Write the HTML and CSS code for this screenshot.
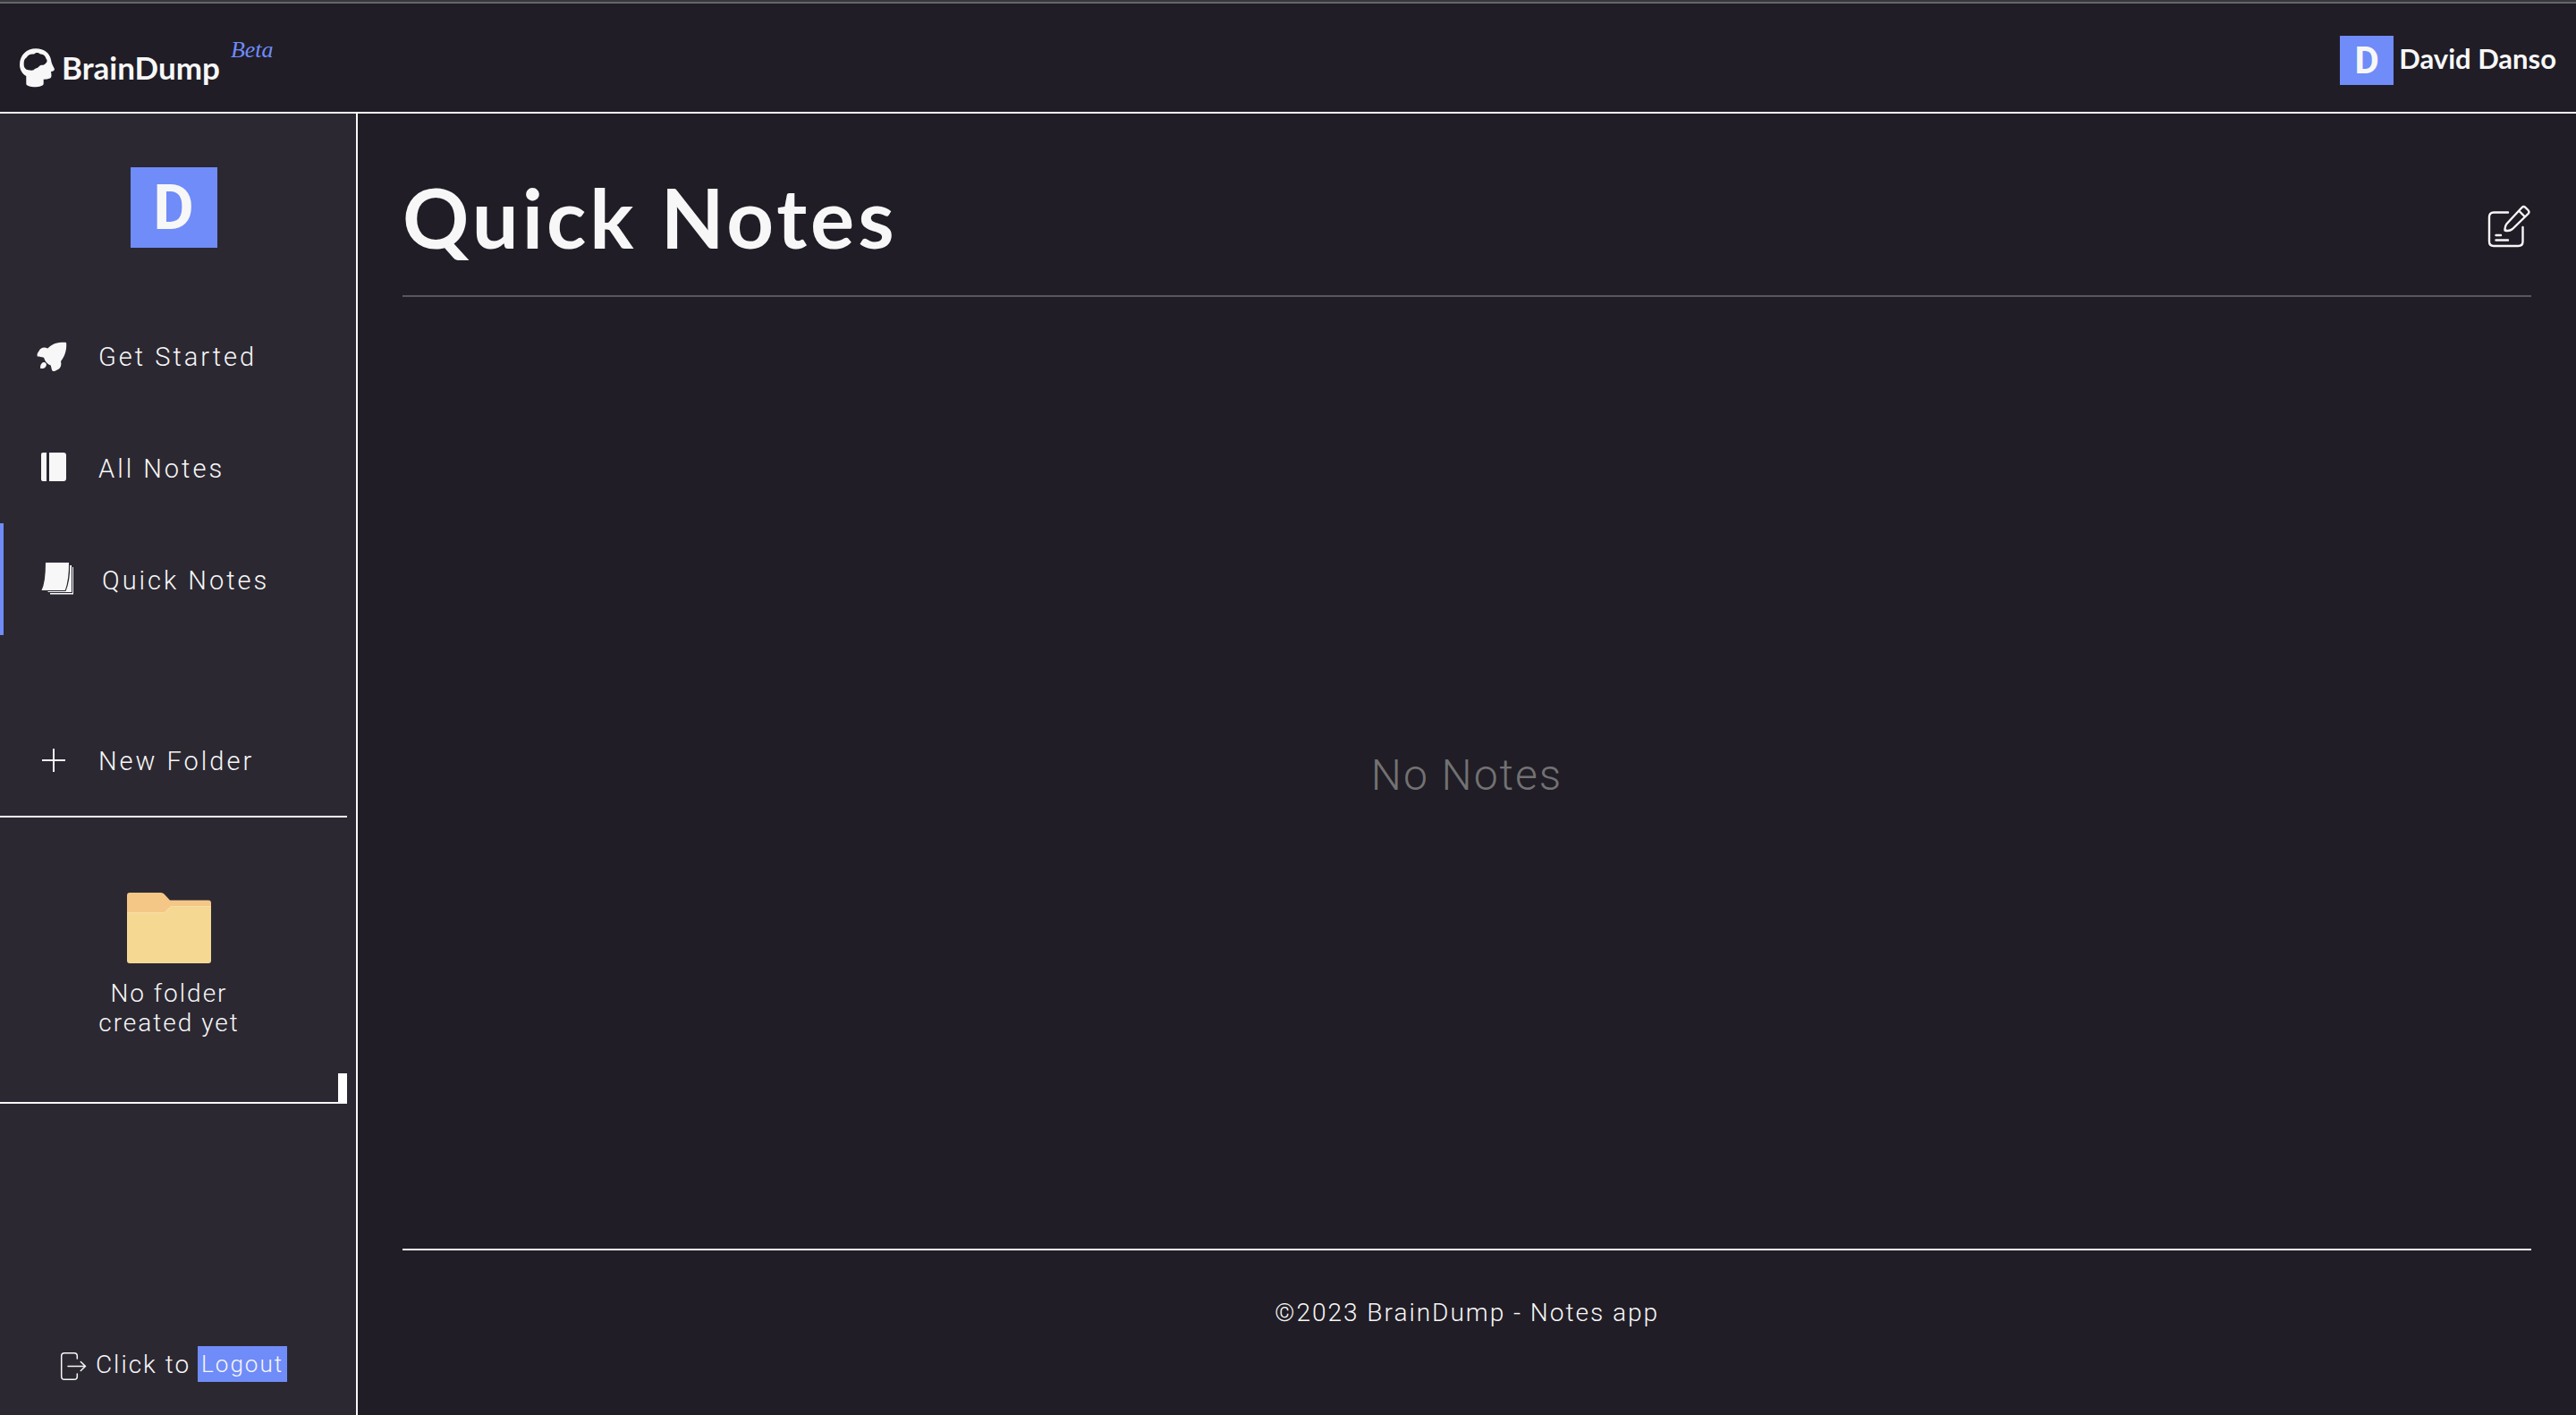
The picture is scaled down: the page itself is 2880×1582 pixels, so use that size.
FILE: index.html
```html
<!DOCTYPE html>
<html lang="en">
<head>
<meta charset="utf-8">
<title>BrainDump - Quick Notes</title>
<link rel="stylesheet" href="styles.css">
</head>
<body>
<header class="topbar">
  <a class="brand" href="#">
    <svg class="brand-logo" viewBox="0 0 40 44" aria-hidden="true"><path fill="currentColor" fill-rule="evenodd" d="M18 .3C27.500.3 33.500 5.500 35 12.700C35.300 16.500 37.500 20 39 23.200Q38.700 25.700 35 26C35.600 29.500 36 32.500 34 33.500Q30.500 34.800 26.700 34.700V39.500C26.700 44.500 7.300 44.500 7.300 39.500V31C2.500 28.500 0 23.500 0 18.300C0 7.500 8 .3 18 .3ZM4.700 17.700C4.500 21 6.500 24 9.700 24.200C12 24.800 14 24.800 15.700 24.300C17 22.500 18 22.500 19.700 22C21.500 20.500 22.500 19 24 18.700C26 19 28 18.500 29 16.700C31 15.500 31 13 29.500 11.500C28.500 8.500 26.500 6 23 6.500C20 4 17.500 5 16 6.500C12 6 9 7.500 7.800 10.300C5 12 4.500 15 4.700 17.700Z"/></svg>
    <span class="brand-name">BrainDump</span>
    <span class="brand-tag">Beta</span>
  </a>
  <div class="account">
    <span class="avatar avatar-small">D</span>
    <span class="account-name">David Danso</span>
  </div>
</header>
<div class="layout">
  <aside class="sidebar">
    <div class="avatar avatar-large">D</div>
    <nav class="menu">
      <a class="menu-item" href="#">
        <svg class="menu-icon" viewBox="0 0 40 40" aria-hidden="true"><path fill="currentColor" d="M13.300 12.500C19 6.500 25 5.500 33 5.700Q34.200 5.700 34.200 7C34.500 15 32.500 21 28 27C28.800 30 28.500 34 25 36C22 37.500 20 39 18.500 37.500C17.300 35.500 17.500 33.500 16.700 31.500Q11 29.500 9 22.700C6 21.500 4 22.500 2 21.500C.8 19.500 2 17.500 3.500 15.500C6 11 9.500 11 13.300 12.500ZM8.700 28C10.500 28 12.500 29.500 11.800 31.500C11 34.500 8 35.500 5.200 35C4.800 32 6 28.500 8.700 28Z"/></svg>
        <span>Get Started</span>
      </a>
      <a class="menu-item" href="#">
        <svg class="menu-icon" viewBox="0 0 40 40" aria-hidden="true"><path fill="currentColor" d="M8 4H12V36H8Q6 36 6 34V6Q6 4 8 4ZM15 4H31Q34 4 34 7V33Q34 36 31 36H15Z"/></svg>
        <span>All Notes</span>
      </a>
      <a class="menu-item active" href="#" aria-current="page">
        <svg class="menu-icon" viewBox="0 0 40 40" aria-hidden="true"><path fill="currentColor" d="M7 2H33Q33.200 21 28.800 33H2.500Q7 24 7 2ZM34.200 5H36V35H9.500V34H29.500Q34.500 22 34.200 5ZM37 7H38V37.500H12V36H37Z"/></svg>
        <span>Quick Notes</span>
      </a>
    </nav>
    <button class="menu-item new-folder" type="button">
      <svg class="menu-icon" viewBox="0 0 40 40" aria-hidden="true"><path stroke="currentColor" stroke-width="2" d="M20 8V34M7 21H33"/></svg>
      <span>New Folder</span>
    </button>
    <section class="folders">
      <div class="folders-empty">
        <svg class="folder-art" viewBox="0 0 94 79" aria-hidden="true"><path fill="#f5c786" d="M3 0H38Q40 0 41.500 1.500L48 8.500H91Q94 8.500 94 11.500V40H0V3Q0 0 3 0Z"/><path fill="#f5d993" d="M0 22H41Q42 22 43 21L48 16Q49 15 50 15H94V76Q94 79 91 79H3Q0 79 0 76Z"/><path fill="none" stroke="#f8dfa5" d="M0 22.500H41Q42 22.500 43 21.500L48 16.500Q49 15.500 50 15.500H94"/></svg>
        <p>No folder<br>created yet</p>
      </div>
      <div class="folders-track"><div class="folders-thumb"></div></div>
    </section>
    <div class="logout">
      <svg class="logout-icon" viewBox="0 0 32 34" aria-hidden="true"><g fill="none" stroke="currentColor" stroke-width="1.500" stroke-linecap="round" stroke-linejoin="round"><path d="M19.300 8V5Q19.300 1.700 16 1.700H5Q1.700 1.700 1.700 5V28Q1.700 31.300 5 31.300H16Q19.300 31.300 19.300 28V25"/><path d="M9 16.500H28.500M23.300 11.500L28.500 16.500L23.300 21.500"/></g></svg>
      <span>Click to</span>
      <button class="logout-button" type="button">Logout</button>
    </div>
  </aside>
  <main class="content">
    <div class="page-head">
      <h1>Quick Notes</h1>
      <button class="compose" type="button" aria-label="New note">
        <svg viewBox="0 0 50 50" aria-hidden="true"><g fill="none" stroke="currentColor" stroke-width="2.400" stroke-linecap="round" stroke-linejoin="round"><path d="M24 8.500H8Q3 8.500 3 13.500V41Q3 46 8 46H35.500Q40.500 46 40.500 41V25"/><path d="M10.500 34H16M10.500 39.500H24M20.500 28.500C20.500 25 20.500 23.500 22.500 21.200L39.500 3Q41.500 1 43.500 3L46.500 6Q48.500 8 46.500 10L29 27C26.500 29 23.500 29.500 20.500 28.500ZM36.500 7L42.500 13"/></g></svg>
      </button>
    </div>
    <section class="notes"><p>No Notes</p></section>
    <footer class="footer">©2023 BrainDump - Notes app</footer>
  </main>
</div>
</body>
</html>
```
FILE: styles.css
```css
:root {
  --bg: #201d26;
  --panel: #2b2832;
  --text: #f7f7f7;
  --accent: #6f8cf8;
}

* {
  box-sizing: border-box;
}

body {
  margin: 0;
  min-height: 100vh;
  display: flex;
  flex-direction: column;
  background: var(--bg);
  color: var(--text);
  font-family: Roboto, "Liberation Sans", sans-serif;
  font-weight: 300;
  border-top: 2px solid #37383b;
}

a {
  color: inherit;
  text-decoration: none;
}

button {
  padding: 0;
  border: 0;
  background: none;
  color: inherit;
  font: inherit;
  letter-spacing: inherit;
  cursor: pointer;
}

svg {
  display: block;
  flex: none;
}

p {
  margin: 0;
}

.topbar {
  display: flex;
  justify-content: space-between;
  align-items: flex-start;
  height: 125px;
  padding: 36px 22px 0;
  border-top: 2px solid #68646b;
  border-bottom: 2px solid var(--text);
  font-family: Lato, sans-serif;
  font-weight: 700;
}

.brand {
  display: flex;
  align-items: flex-start;
}

.brand-logo {
  width: 40px;
  height: 44px;
  margin-top: 14px;
}

.brand-name {
  margin: 15px 12px 0 7px;
  font-size: 35px;
  line-height: 40px;
}

.brand-tag {
  font-family: "Liberation Serif", serif;
  font-style: italic;
  font-weight: 400;
  font-size: 26px;
  line-height: 32px;
  color: var(--accent);
}

.account {
  display: flex;
  align-items: center;
  gap: 6px;
}

.account-name {
  padding-bottom: 5px;
  font-size: 31px;
  line-height: 40px;
}

.avatar {
  display: flex;
  align-items: center;
  justify-content: center;
  background: var(--accent);
  font-family: Roboto, sans-serif;
  font-weight: 700;
}

.avatar-small {
  width: 60px;
  height: 55px;
  font-size: 42px;
}

.avatar-large {
  width: 97px;
  height: 90px;
  margin: 60px auto 58px;
  font-size: 70px;
}

.layout {
  flex: 1;
  display: flex;
}

.sidebar {
  flex: none;
  width: 400px;
  display: flex;
  flex-direction: column;
  padding: 0 10px 37px 0;
  background: var(--panel);
  border-right: 2px solid var(--text);
}

.menu {
  display: flex;
  flex-direction: column;
}

.menu-item {
  display: flex;
  align-items: center;
  gap: 30px;
  padding: 40px 0 41px 40px;
  font-size: 29px;
  line-height: 40px;
  letter-spacing: 3px;
}

.menu-item span {
  padding-top: 4px;
}

.menu-icon {
  width: 40px;
  height: 40px;
}

.active {
  border-left: 4px solid var(--accent);
}

.new-folder {
  margin-top: 77px;
  border-bottom: 2px solid var(--text);
}

.folders {
  display: flex;
  height: 320px;
  border-bottom: 2px solid var(--text);
}

.folders-empty {
  flex: 1;
  display: flex;
  flex-direction: column;
  align-items: center;
  gap: 17px;
  padding-top: 84px;
  font-size: 28px;
  line-height: 33px;
  letter-spacing: 2px;
  text-align: center;
}

.folder-art {
  width: 94px;
  height: 79px;
}

.folders-track {
  width: 10px;
  display: flex;
  align-items: flex-end;
}

.folders-thumb {
  width: 10px;
  height: 32px;
  background: #fff;
}

.logout {
  display: flex;
  align-items: center;
  justify-content: center;
  gap: 8px;
  margin-top: auto;
  font-size: 28px;
  letter-spacing: 2px;
}

.logout-icon {
  width: 32px;
  height: 40px;
  padding-top: 6px;
}

.logout-button {
  padding: 0 4px;
  background: var(--accent);
  font-size: 26px;
  line-height: 40px;
}

.content {
  flex: 1;
  display: flex;
  flex-direction: column;
  padding: 0 50px;
}

.page-head {
  display: flex;
  align-items: center;
  justify-content: space-between;
  padding: 56px 0 27px;
  border-bottom: 2px solid #5a565e;
}

.page-head h1 {
  margin: 0;
  font-family: Lato, sans-serif;
  font-weight: 700;
  font-size: 92px;
  line-height: 120px;
  letter-spacing: 4px;
}

.compose {
  padding-top: 22px;
}

.compose svg {
  width: 50px;
  height: 50px;
}

.notes {
  flex: 1;
  display: flex;
  align-items: center;
  justify-content: center;
  padding-top: 4px;
  color: #727272;
  font-size: 48px;
  letter-spacing: 2px;
}

.footer {
  padding: 50px 0 94px;
  border-top: 2px solid var(--text);
  font-size: 28px;
  line-height: 40px;
  letter-spacing: 2px;
  text-align: center;
}
```
